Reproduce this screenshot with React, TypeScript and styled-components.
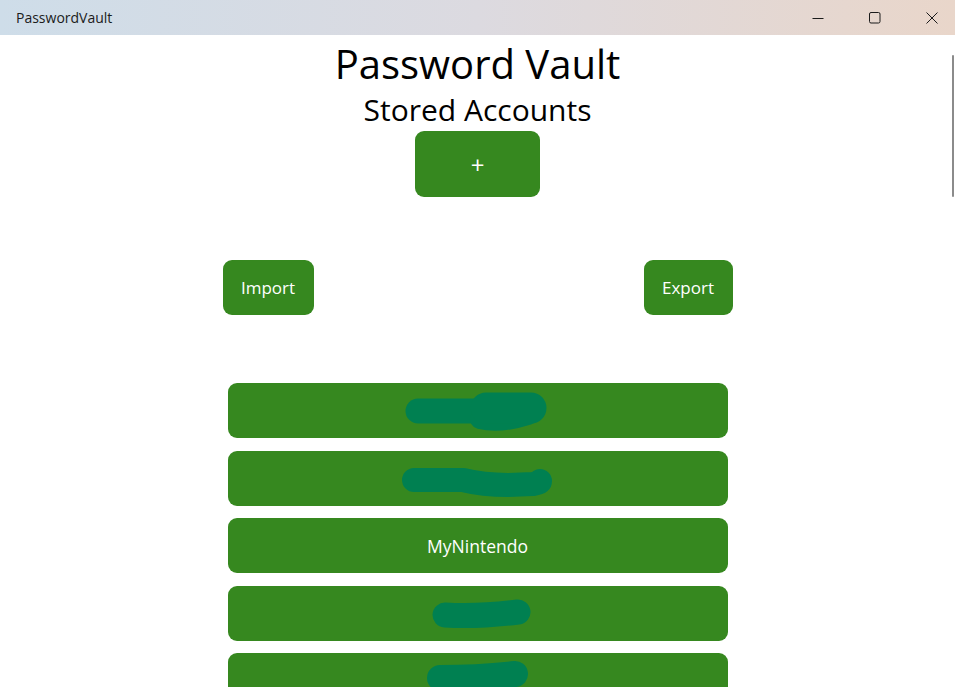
import { createGlobalStyle, styled } from "styled-components";

const GlobalStyle = createGlobalStyle`
  body {
    margin: 0;
    background: #ffffff;
    font-family: "Open Sans", "Noto Sans", sans-serif;
  }
`;

const Window = styled.div`
  width: 955px;
  height: 691px;
  overflow: hidden;
  display: flex;
  flex-direction: column;
  background: #ffffff;
`;

const TitleBar = styled.div`
  height: 35px;
  flex: none;
  display: flex;
  align-items: center;
  padding-left: 16px;
  background: linear-gradient(90deg, #cedde9 0%, #dcdae0 50%, #e9d6ca 100%);
  font-family: "Open Sans", "Noto Sans", sans-serif;
  font-size: 14px;
  color: #1b1b1b;
`;

const Controls = styled.div`
  display: flex;
  margin-left: auto;
  margin-right: -5px;
  height: 100%;
`;

const ControlButton = styled.div`
  width: 57px;
  height: 100%;
  display: flex;
  align-items: center;
  justify-content: center;
  color: #1b1b1b;
`;

const Content = styled.div`
  position: relative;
  height: 652px;
  overflow: hidden;
  display: flex;
  flex-direction: column;
  align-items: center;
`;

const ScrollThumb = styled.div`
  position: absolute;
  right: 1px;
  top: 20px;
  width: 2px;
  height: 142px;
  border-radius: 1px;
  background: #8b8b8b;
`;

const Title = styled.h1`
  margin: 4px 0 0;
  font-size: 40px;
  font-weight: 400;
  line-height: 50px;
  color: #000000;
`;

const Subtitle = styled.h2`
  margin: 0;
  font-size: 30px;
  font-weight: 400;
  line-height: 42px;
  color: #000000;
`;

const GreenButton = styled.button<{ $w: number; $h: number; $size?: number }>`
  width: ${(p) => p.$w}px;
  height: ${(p) => p.$h}px;
  border: none;
  border-radius: 9px;
  background: #36881f;
  color: #ffffff;
  font-family: "Open Sans", "Noto Sans", sans-serif;
  font-size: ${(p) => p.$size ?? 17}px;
  display: flex;
  align-items: center;
  justify-content: center;
  padding: 0;
  flex: none;
`;

const IoRow = styled.div`
  width: 510px;
  display: flex;
  justify-content: space-between;
  margin-top: 63px;
`;

const List = styled.div`
  display: flex;
  flex-direction: column;
  gap: 12.5px;
  margin-top: 68px;
`;

const AccountRow = styled.div`
  width: 500px;
  height: 55px;
  flex: none;
  border-radius: 9px;
  background: #36881f;
  color: #ffffff;
  font-size: 17.5px;
  display: flex;
  align-items: center;
  justify-content: center;
  overflow: hidden;
`;

const Scribble = styled.svg`
  display: block;
  width: 500px;
  height: 55px;
`;

type Stroke = { d: string; w: number };

const accounts: { name?: string; strokes?: Stroke[] }[] = [
  {
    strokes: [
      { d: "M190 28 L250 28", w: 25 },
      { d: "M252 36 Q272 41 300 32", w: 20 },
      { d: "M258 25 L303 25", w: 31 },
    ],
  },
  {
    strokes: [{ d: "M186 29 L235 29 Q255 34 280 34 L305 33 Q312 32 312 30", w: 24 }],
  },
  { name: "MyNintendo" },
  { strokes: [{ d: "M217 29 Q250 31 290 26", w: 25 }] },
  { strokes: [{ d: "M212 25 Q250 25 287 21", w: 26 }] },
];

function App() {
  return (
    <>
      <GlobalStyle />
      <Window>
        <TitleBar>
          PasswordVault
          <Controls>
            <ControlButton>
              <svg width="12" height="12" viewBox="0 0 12 12">
                <path d="M0.5 6.5 H11.5" stroke="currentColor" strokeWidth="1" />
              </svg>
            </ControlButton>
            <ControlButton>
              <svg width="12" height="12" viewBox="0 0 12 12">
                <rect x="0.5" y="0.5" width="10.5" height="10.5" rx="1.5" fill="none" stroke="currentColor" strokeWidth="1" />
              </svg>
            </ControlButton>
            <ControlButton>
              <svg width="12" height="12" viewBox="0 0 12 12">
                <path d="M0.5 0.5 L11.5 11.5 M11.5 0.5 L0.5 11.5" stroke="currentColor" strokeWidth="1" />
              </svg>
            </ControlButton>
          </Controls>
        </TitleBar>
        <Content>
          <ScrollThumb />
          <Title>Password Vault</Title>
          <Subtitle>Stored Accounts</Subtitle>
          <GreenButton $w={125} $h={66} $size={24}>+</GreenButton>
          <IoRow>
            <GreenButton $w={91} $h={55}>Import</GreenButton>
            <GreenButton $w={89} $h={55}>Export</GreenButton>
          </IoRow>
          <List>
            {accounts.map((a, i) => (
              <AccountRow key={i}>
                {a.name ?? (
                  <Scribble viewBox="0 0 500 55">
                    {a.strokes?.map((s, j) => (
                      <path
                        key={j}
                        d={s.d}
                        fill="none"
                        stroke="#008051"
                        strokeWidth={s.w}
                        strokeLinecap="round"
                        strokeLinejoin="round"
                      />
                    ))}
                  </Scribble>
                )}
              </AccountRow>
            ))}
          </List>
        </Content>
      </Window>
    </>
  );
}

export default App;
